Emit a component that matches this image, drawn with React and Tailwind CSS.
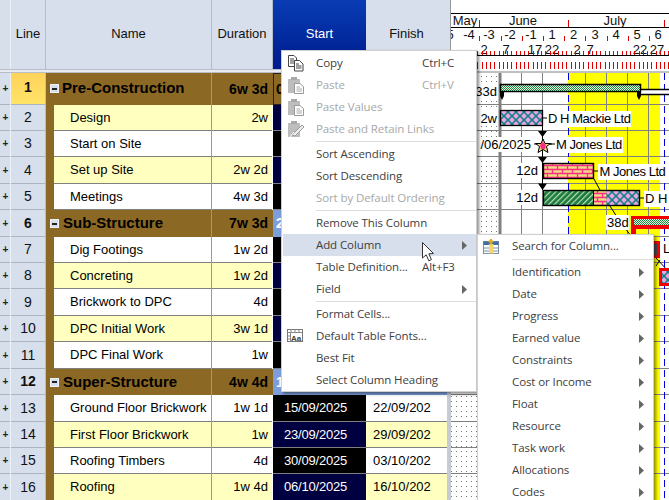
import React from "react";

const rows = [
  { n: 1, h: "h-[32px]", kind: "sum", name: "Pre-Construction", dur: "6w 3d", start: "0", first: true },
  { n: 2, h: "h-[26px]", kind: "y", name: "Design", dur: "2w" },
  { n: 3, h: "h-[26px]", kind: "w", name: "Start on Site", dur: "" },
  { n: 4, h: "h-[27px]", kind: "y", name: "Set up Site", dur: "2w 2d" },
  { n: 5, h: "h-[26px]", kind: "w", name: "Meetings", dur: "4w 3d" },
  { n: 6, h: "h-[27px]", kind: "sum", name: "Sub-Structure", dur: "7w 3d", start: "2" },
  { n: 7, h: "h-[26px]", kind: "w", name: "Dig Footings", dur: "1w 2d" },
  { n: 8, h: "h-[26px]", kind: "y", name: "Concreting", dur: "1w 2d" },
  { n: 9, h: "h-[27px]", kind: "w", name: "Brickwork to DPC", dur: "4d" },
  { n: 10, h: "h-[26px]", kind: "y", name: "DPC Initial Work", dur: "3w 1d" },
  { n: 11, h: "h-[27px]", kind: "w", name: "DPC Final Work", dur: "1w" },
  { n: 12, h: "h-[26px]", kind: "sum", name: "Super-Structure", dur: "4w 4d", start: "1" },
  { n: 13, h: "h-[27px]", kind: "w", name: "Ground Floor Brickwork", dur: "1w 1d", start: "15/09/2025", finish: "22/09/202" },
  { n: 14, h: "h-[26px]", kind: "y", name: "First Floor Brickwork", dur: "1w", start: "23/09/2025", finish: "29/09/202" },
  { n: 15, h: "h-[26px]", kind: "w", name: "Roofing Timbers", dur: "4d", start: "30/09/2025", finish: "03/10/202" },
  { n: 16, h: "h-[27px]", kind: "y", name: "Roofing", dur: "1w 4d", start: "06/10/2025", finish: "16/10/202" },
];

const H = "bg-[#d6dfeb] flex items-center justify-center border-r border-[#b4bdca] pb-[2px]";

function Minus() {
  return (
    <span className="w-[9px] h-[9px] shrink-0 bg-[#d6dfeb] border border-[#eef2f7] flex items-center justify-center">
      <span className="w-[5px] h-[2px] bg-[#222]" />
    </span>
  );
}

function Row({ r }) {
  const sum = r.kind === "sum";
  const yellow = r.kind === "y";
  return (
    <div className={`flex ${r.h}`}>
      <div className="w-[10px] bg-[#d6dfeb] border-b border-[#a9b4c2] flex items-center justify-center pl-[1px] text-[10px] font-bold text-[#222]">+</div>
      <div className="w-[1px] bg-[#eef2f7]" />
      <div
        className={`w-[34px] border-b border-[#a9b4c2] flex items-center justify-center text-[#111] ${r.first ? "bg-gradient-to-b from-[#ffd25c] to-[#ffe468] pb-[2px]" : "bg-[#d6dfeb]"} ${sum ? "font-bold text-[14px]" : "text-[14px]"}`}
      >
        {r.n}
      </div>
      <div className="w-[1px] bg-[#b4bdca]" />
      {sum ? (
        <>
          <div className={`w-[165px] bg-[#8b6823] flex items-center pl-[4px] font-bold text-[15px] text-black ${r.first ? "gap-[3px] pb-[1px]" : "gap-[4px]"}`}>
            <Minus />
            <span>{r.name}</span>
          </div>
          <div className="w-[1px] bg-[#a89878]" />
          <div className="w-[60px] bg-[#8b6823] flex items-center justify-end pr-[4px] font-bold text-[14px] text-black">{r.dur}</div>
          <div className="w-[1px] bg-[#8b6823]" />
          <div
            className={`w-[93px] flex items-center pl-[2px] font-bold text-[14px] ${r.first ? "bg-[#8b6823] border border-[#222] text-black" : "bg-[#7c9edc] text-white pl-[3px]"}`}
          >
            {r.start}
          </div>
          <div className={`w-[81px] ${r.first ? "bg-[#8b6823]" : "bg-[#7c9edc]"}`} />
        </>
      ) : (
        <>
          <div className="w-[8px] bg-[#8b6823]" />
          <div className={`w-[157px] flex items-center pl-[16px] border-b border-[#808080] text-black ${yellow ? "bg-[#ffffc0]" : "bg-white"}`}>{r.name}</div>
          <div className="w-[1px] bg-[#999]" />
          <div className={`w-[60px] flex items-center justify-end pr-[4px] border-b border-[#808080] text-black ${yellow ? "bg-[#ffffc0]" : "bg-white"}`}>{r.dur}</div>
          <div className="w-[1px] bg-white" />
          <div className={`w-[93px] flex items-center pl-[11px] tracking-[-0.2px] border-b border-[#808080] text-white ${yellow ? "bg-[#000040]" : "bg-black"}`}>{r.start}</div>
          <div className={`w-[81px] flex items-center pl-[7px] border-b border-[#808080] text-black ${yellow ? "bg-[#ffffc0]" : "bg-white"}`}>{r.finish}</div>
        </>
      )}
      <div className="w-[4px] bg-[#c8ccd2]" />
    </div>
  );
}

const bounds = [73, 105, 131, 157, 184, 210, 237, 263, 289, 316, 342, 369, 395, 422, 448, 474];
const weekX = Array.from({ length: 10 }, (_, i) => 479.3 + i * 21.2);
const weekLabels = [
  ["-5", 448], ["-4", 469], ["-3", 489], ["-2", 510], ["-1", 531], ["1", 552], ["2", 573.5], ["3", 595], ["4", 616], ["5", 637], ["6", 658],
];
const dayLabels = [["2", 484], ["7", 506], ["17", 535], ["22", 552], ["2", 577], ["7", 590], ["22", 640], ["27", 657]];
const dayTicks = Array.from({ length: 52 }, (_, i) => 452 + i * 4.24);

function Gantt() {
  const T = { fontFamily: "'Liberation Sans', sans-serif", fontSize: 13 };
  const L = { ...T, letterSpacing: -0.45 };
  return (
    <svg viewBox="451 0 218 500" width="218" height="500" className="block shrink-0">
      <defs>
        <pattern id="dots" width="5" height="5" patternUnits="userSpaceOnUse">
          <rect x="1" y="1" width="1" height="1" fill="#777" />
        </pattern>
        <pattern id="check" width="2" height="2" patternUnits="userSpaceOnUse">
          <rect width="2" height="2" fill="#e6f6e2" />
          <rect x="0" y="0" width="1" height="1" fill="#1a8a44" />
          <rect x="1" y="1" width="1" height="1" fill="#1a8a44" />
        </pattern>
        <pattern id="diam" width="8" height="8" patternUnits="userSpaceOnUse">
          <rect width="8" height="8" fill="#0f8080" />
          <path d="M4 1.1L6.9 4L4 6.9L1.1 4Z" fill="#e8a4e4" />
          <path d="M0 0L2.9 0L0 2.9ZM8 0L5.1 0L8 2.9ZM0 8L2.9 8L0 5.1ZM8 8L5.1 8L8 5.1Z" fill="#e8a4e4" />
        </pattern>
        <pattern id="brick" width="10" height="8" patternUnits="userSpaceOnUse">
          <rect width="10" height="8" fill="#eeda80" />
          <path d="M0 1.5H10M0 5.5H10M2.5 1.5V5.5M7.5 5.5V8M7.5 0V1.5" stroke="#ff2a88" strokeWidth="1.3" />
        </pattern>
        <pattern id="hatch" width="4" height="4" patternUnits="userSpaceOnUse" patternTransform="rotate(-45)">
          <rect width="4" height="4" fill="#1c7a3c" />
          <rect width="4" height="1.2" fill="#b8e0b8" />
        </pattern>
      </defs>

      {/* header */}
      <rect x="451" y="0" width="218" height="73" fill="#fff" />
      <path d="M451 13.5H669M451 27.5H669M451 55.5H669" stroke="#000" strokeWidth="1" />
      <rect x="451" y="71" width="218" height="2" fill="#c0c0c0" />
      <path d="M479.5 20V27M568.5 20V27M664.5 20V27" stroke="#e00000" strokeWidth="1" />
      <g {...T} fill="#111" textAnchor="middle">
        <text x="465" y="25">May</text>
        <text x="523" y="25">June</text>
        <text x="615" y="25">July</text>
        {weekLabels.map(([t, x]) => (
          <text key={x} x={x} y="39">{t}</text>
        ))}
        {dayLabels.map(([t, x]) => (
          <text key={x} x={x} y="54">{t}</text>
        ))}
      </g>
      {weekX.map((x) => (
        <path key={x} d={`M${Math.round(x) + 0.5} 36V41`} stroke="#e00000" />
      ))}
      {dayTicks.map((x) => (
        <path key={x} d={`M${Math.round(x) + 0.5} 51V55`} stroke="#e00000" />
      ))}
      {dayTicks.map((x) => (
        <path key={x} d={`M${Math.round(x) + 0.5} 62V69`} stroke="#e00000" />
      ))}

      {/* body */}
      <rect x="451" y="73" width="47" height="427" fill="url(#dots)" />
      <rect x="568" y="73" width="92" height="427" fill="#ffff00" />
      {[521.5, 542.5, 585.5, 606.5, 627.5, 648.5].map((x) => (
        <path key={x} d={`M${x} 73V500`} stroke="#808080" />
      ))}
      {bounds.slice(1).map((y) => (
        <path key={y} d={`M451 ${y - 0.5}H669`} stroke="#808080" />
      ))}
      <rect x="498.5" y="73" width="3" height="427" fill="#808080" />
      <path d="M568.5 73V500M664.5 73V500" stroke="#0000e0" strokeWidth="1" strokeDasharray="7 4" />

      {/* row 1 summary */}
      <rect x="475" y="83" width="23" height="16" fill="#fff" />
      <text {...T} x="497" y="96" textAnchor="end" fill="#000">33d</text>
      <rect x="641" y="89" width="28" height="6" fill="#fff" />
      <path d="M641 89.5H669M641 94.5H669" stroke="#000" strokeWidth="1.3" />
      <rect x="500.5" y="84.5" width="140" height="7" fill="url(#check)" stroke="#000" strokeWidth="1.5" />
      <path d="M500 84V96L502 100L504 96V92H506V91H500Z" fill="#000" />
      <path d="M641 84V96L639 100L637 96V92H635V91H641Z" fill="#000" />

      {/* row 2 */}
      <rect x="479" y="110" width="19" height="16" fill="#fff" />
      <text {...T} x="497" y="123" textAnchor="end" fill="#000">2w</text>
      <rect x="500.5" y="110.5" width="42" height="15" fill="url(#diam)" stroke="#000" strokeWidth="1.3" />
      <path d="M543 118H548" stroke="#000" />
      <rect x="547" y="111" width="84" height="16" fill="#fff" />
      <text {...L} x="548" y="123" fill="#000">D H Mackie Ltd</text>

      {/* row 3 milestone */}
      <rect x="479" y="137" width="53" height="15" fill="#fff" />
      <text {...T} x="531" y="149" textAnchor="end" fill="#000">/06/2025</text>
      <path d="M542.5 126V190" stroke="#000" />
      <path d="M538 131H547L542.5 137ZM538 157H547L542.5 163ZM538 183.5H547L542.5 190Z" fill="#000" />
      <path d="M534 144H552" stroke="#000" />
      <path d="M543 139L545 143.5H550.5L546.5 146.5L548 152.5L543 149.5L538 152.5L539.5 146.5L535.5 143.5H541Z" fill="#e8d878" stroke="#000" />
      <path d="M543 142L546 145L545 149L541 149L540 145Z" fill="#ff2a88" />
      <path d="M550 144H556" stroke="#000" />
      <rect x="555" y="137" width="68" height="16" fill="#fff" />
      <text {...L} x="556" y="149" fill="#000">M Jones Ltd</text>

      {/* row 4 */}
      <rect x="518" y="163" width="21" height="15" fill="#fff" />
      <text {...T} x="538" y="175" textAnchor="end" fill="#000">12d</text>
      <rect x="543.5" y="163.5" width="50" height="15" fill="url(#brick)" stroke="#000" strokeWidth="1.4" />
      <path d="M594 171H599" stroke="#000" />
      <rect x="598" y="164" width="67" height="16" fill="#fff" />
      <text {...L} x="599.5" y="176" fill="#000">M Jones Ltd</text>

      {/* row 5 */}
      <rect x="518" y="190" width="21" height="15" fill="#fff" />
      <text {...T} x="538" y="202" textAnchor="end" fill="#000">12d</text>
      <path d="M594 179L600 190M610 206L617 217" stroke="#000" />
      <rect x="543.5" y="190.5" width="50" height="15" fill="url(#hatch)" />
      <rect x="593.5" y="190.5" width="13" height="15" fill="url(#brick)" />
      <rect x="606.5" y="190.5" width="33" height="15" fill="url(#diam)" />
      <rect x="543.5" y="190.5" width="96" height="15" fill="none" stroke="#000" strokeWidth="1.4" />
      <path d="M593.5 190V206" stroke="#000" />
      <path d="M640 198H645" stroke="#000" />
      <rect x="644" y="191" width="25" height="16" fill="#fff" />
      <text {...T} x="645" y="203" fill="#000">D H</text>

      {/* row 6 */}
      <path d="M625 228L631 236" stroke="#000" />
      <rect x="606" y="215" width="23" height="15" fill="#fff" />
      <text {...T} x="607" y="227" fill="#000">38d</text>
      <rect x="631" y="216" width="38" height="13" fill="#f00000" />
      <rect x="634" y="219" width="35" height="6" fill="url(#check)" />
      <path d="M631 229H636V236H631Z" fill="#f00000" />

      {/* rows 7 - 8 */}
      <rect x="650" y="241" width="10" height="17" fill="#f00000" />
      <rect x="652" y="244" width="6" height="11" fill="#4a4a55" />
      <rect x="662" y="241" width="7" height="16" fill="#fff" />
      <text {...T} x="663" y="253" fill="#000">L</text>
      <path d="M656 258L669 272M660 260L656 266" stroke="#000" />
      <rect x="660.5" y="269.5" width="12" height="15" fill="url(#diam)" stroke="#f00000" strokeWidth="3" />
    </svg>
  );
}

const Arrow = () => (
  <svg width="5" height="9" viewBox="0 0 5 9" className="shrink-0">
    <path d="M0 0L5 4.5L0 9Z" fill="#666" />
  </svg>
);

const CopyIcon = () => (
  <svg width="18" height="18" viewBox="0 0 18 18">
    <path d="M1.5 1.5H7L9.5 4V12.5H1.5Z" fill="#fff" stroke="#444" />
    <path d="M3 5H7M3 7H8M3 9H8" stroke="#444" />
    <path d="M7.5 6.5H12.5L16 10V17H7.5Z" fill="#fff" stroke="#444" />
    <path d="M9 10H12M9 12H14.5M9 14H14.5" stroke="#444" />
  </svg>
);
const PasteIcon = () => (
  <svg width="18" height="18" viewBox="0 0 18 18">
    <rect x="1" y="3" width="12" height="14" fill="#bdbdbd" />
    <rect x="4" y="1" width="6" height="3" fill="#a8a8a8" />
    <path d="M7.5 7.5H13L16.5 10.5V17.5H7.5Z" fill="#fff" stroke="#999" />
    <path d="M9.5 11H13M9.5 13H15M9.5 15H15" stroke="#aaa" />
  </svg>
);
const RetainIcon = () => (
  <svg width="18" height="18" viewBox="0 0 18 18">
    <rect x="1" y="3" width="12" height="14" fill="#bdbdbd" />
    <rect x="4" y="1" width="6" height="3" fill="#a8a8a8" />
    <path d="M5 15L15 5L17 7L8 16Z" fill="#eee" stroke="#999" />
    <path d="M3 17L7 12" stroke="#fff" />
  </svg>
);
const FontsIcon = () => (
  <svg width="16" height="14" viewBox="0 0 16 14">
    <rect x=".5" y=".5" width="15" height="12" fill="#fff" stroke="#777" />
    <path d="M.5 3.5H15.5M4 .5V4M8 .5V4M12 .5V4M.5 7H3M.5 10H3M3.5 3.5V12.5" stroke="#888" />
    <text x="4" y="11.5" fontSize="8" fontWeight="bold" fontFamily="'Liberation Sans', sans-serif" fill="#444">Aa</text>
  </svg>
);
const SearchColIcon = () => (
  <svg width="17" height="15" viewBox="0 0 17 15">
    <rect x="0.5" y="2.5" width="15" height="12" fill="#fff" stroke="#7a8ea8" />
    <rect x="0.5" y="2.5" width="15" height="3.5" fill="#3f6ea5" />
    <path d="M.5 9H15.5M.5 12H15.5" stroke="#7a8ea8" />
    <rect x="6" y="5" width="4.5" height="9.5" fill="#f5d66a" />
    <path d="M8 0V5.5M5.5 2.5H10.5" stroke="#e0a820" strokeWidth="2" />
  </svg>
);

const menuItems = [
  { l: "Copy", s: "Ctrl+C", i: <CopyIcon /> },
  { l: "Paste", s: "Ctrl+V", d: true, i: <PasteIcon /> },
  { l: "Paste Values", d: true, i: <PasteIcon /> },
  { l: "Paste and Retain Links", d: true, i: <RetainIcon /> },
  "sep",
  { l: "Sort Ascending" },
  { l: "Sort Descending" },
  { l: "Sort by Default Ordering", d: true },
  "sep",
  { l: "Remove This Column" },
  { l: "Add Column", a: true, on: true },
  { l: "Table Definition...", s: "Alt+F3" },
  { l: "Field", a: true },
  "sep",
  { l: "Format Cells..." },
  { l: "Default Table Fonts...", i: <FontsIcon /> },
  { l: "Best Fit" },
  { l: "Select Column Heading" },
];

const subItems = [
  { l: "Search for Column...", i: <SearchColIcon /> },
  "sep",
  ...["Identification", "Date", "Progress", "Earned value", "Constraints", "Cost or Income", "Float", "Resource", "Task work", "Allocations", "Codes"].map((l) => ({ l, a: true })),
];

function MenuList({ items, labelW, sepH }) {
  return items.map((it, idx) =>
    it === "sep" ? (
      <div key={idx} className={`${sepH} ml-[33px] flex items-center`}>
        <div className="h-[1px] w-full bg-[#dcdcdc]" />
      </div>
    ) : (
      <div key={idx} className={`h-[22px] flex items-center ${it.on ? "bg-[#d6dfeb]" : ""} ${it.d ? "text-[#a8a8a8]" : "text-[#404040]"}`}>
        <span className="w-[33px] shrink-0 flex items-center justify-start pl-[4px]">{it.i}</span>
        <span className={`${labelW} shrink-0 whitespace-nowrap`}>{it.l}</span>
        {it.s && <span className="whitespace-nowrap">{it.s}</span>}
        {it.a && (
          <span className="ml-auto mr-[9px] flex">
            <Arrow />
          </span>
        )}
      </div>
    )
  );
}

export default function App() {
  return (
    <div className="relative w-[669px] h-[500px] overflow-hidden bg-white text-[13px] font-['Liberation_Sans',Arial,sans-serif] flex">
      <div className="w-[451px] shrink-0">
        <div className="flex h-[69px] text-[13px] text-[#111]">
          <div className="w-[10px] bg-[#d6dfeb]" />
          <div className="w-[1px] bg-[#eef2f7]" />
          <div className={`w-[35px] ${H}`}>Line</div>
          <div className={`w-[166px] ${H}`}>Name</div>
          <div className={`w-[61px] ${H}`}>Duration</div>
          <div className="w-[93px] flex items-center justify-center pb-[2px] text-white bg-gradient-to-b from-[#0a3cb4] to-[#001a8c]">Start</div>
          <div className="w-[81px] bg-[#d6dfeb] flex items-center justify-center pb-[2px]">Finish</div>
          <div className="w-[4px] bg-[#d6dfeb] border-r border-[#999]" />
        </div>
        <div className="h-[4px] bg-[#e8ecf2] border-t border-b border-[#b8bec8]" />
        {rows.map((r) => (
          <Row key={r.n} r={r} />
        ))}
      </div>
      <Gantt />

      <div className="absolute left-[281px] top-[50px] w-[196px] bg-white border border-[#cfcfcf] pt-[1px] pl-[1px] shadow-[2px_2px_3px_rgba(0,0,0,0.45)] font-['Open_Sans',sans-serif] text-[11.5px] tracking-[-0.1px]">
        <MenuList items={menuItems} labelW="w-[106px]" sepH="h-[3px]" />
      </div>
      <div className="absolute left-[477px] top-[234px] w-[177px] bg-white border border-[#cfcfcf] pl-[1px] shadow-[2px_2px_3px_rgba(0,0,0,0.45)] font-['Open_Sans',sans-serif] text-[11.5px] tracking-[-0.1px]">
        <MenuList items={subItems} labelW="w-[120px]" sepH="h-[4px]" />
      </div>
      <svg className="absolute left-[422px] top-[242px]" width="14" height="21" viewBox="0 0 14 21">
        <path d="M.5 .5V16L4.2 12.8L6.8 18.8L9.4 17.6L6.8 11.8L11.5 11.5Z" fill="#fff" stroke="#333" />
      </svg>
    </div>
  );
}
